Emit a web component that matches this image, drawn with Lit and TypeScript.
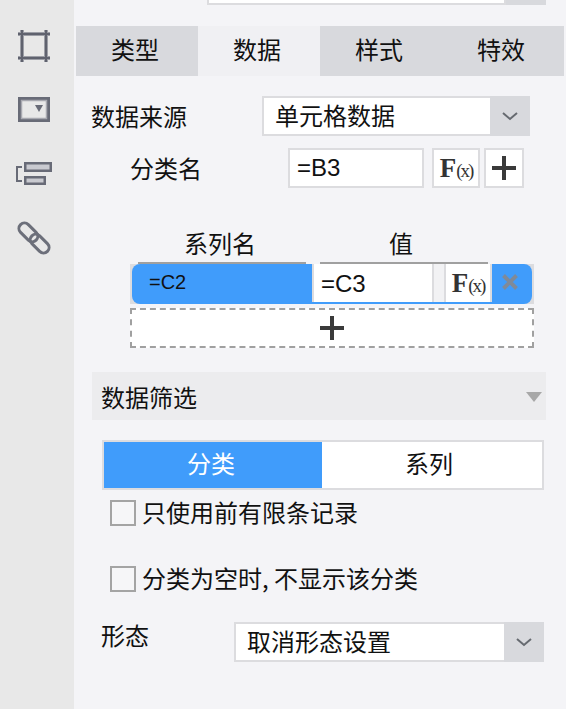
import { LitElement, html, css, svg } from 'lit';
import { customElement } from 'lit/decorators.js';

const chevron = html`<svg width="16" height="10" viewBox="0 0 16 10"><path d="M1 2 L8 8 L15 2" fill="none" stroke="#666a70" stroke-width="2"/></svg>`;
const plus = html`<svg width="24" height="24" viewBox="0 0 24 24"><path d="M0 12H24M12 0V24" stroke="#3a3a3a" stroke-width="4"/></svg>`;

const sideIcons = [
  svg`<path d="M2 8H34M2 32H34M6 4V36M30 4V36" fill="none" stroke="#9c9ea6" stroke-width="4"/><path d="M2 8H34M2 32H34M6 4V36M30 4V36" fill="none" stroke="#5f626e" stroke-width="2"/>`,
  svg`<rect x="3.5" y="8.5" width="29" height="22" fill="none" stroke="#686b77" stroke-width="3"/><rect x="5.5" y="10.5" width="25" height="18" fill="none" stroke="#a8a9b0" stroke-width="1.5"/><path d="M19 15H27L23 22Z" fill="#686b77"/>`,
  svg`<path d="M6 13H1V27H6" fill="none" stroke="#686b77" stroke-width="2"/><rect x="9.25" y="9.25" width="25.5" height="7.5" fill="#c9cad0" stroke="#686b77" stroke-width="2.5"/><rect x="9.25" y="23.25" width="19.5" height="6.5" fill="#c9cad0" stroke="#686b77" stroke-width="2.5"/>`,
  svg`<g transform="rotate(45 18 20)" fill="none" stroke="#6c6f7a" stroke-width="3"><rect x="-1" y="14.5" width="22" height="11" rx="5.5"/><rect x="15" y="14.5" width="22" height="11" rx="5.5"/></g>`,
];

@customElement('app-root')
export class AppRoot extends LitElement {
  static styles = css`
    :host {
      display: flex;
      width: 566px;
      height: 709px;
      overflow: hidden;
      background: #f4f4f7;
      color: #111;
      font-family: "Noto Sans CJK SC", "Liberation Sans", sans-serif;
      font-size: 24px;
      line-height: 30px;
    }
    .side {
      flex: none;
      box-sizing: border-box;
      width: 74px;
      background: #e8e8e8;
      padding: 26px 0 0 16px;
      display: flex;
      flex-direction: column;
      gap: 24px;
    }
    .side svg { display: block; }
    .main { flex: 1; min-width: 0; display: flex; flex-direction: column; }

    .top { display: flex; height: 5px; margin-left: 133px; width: 339px; }
    .top .val { flex: 1; background: #fff; border: 2px solid #dcdcdf; border-top: 0; }
    .top .arr { width: 40px; background: #d8d9dd; }

    .tabs { display: flex; margin: 21px 0 0 2px; width: 488px; height: 50px; }
    .tab {
      box-sizing: border-box;
      flex: 1;
      display: flex;
      align-items: center;
      justify-content: center;
      padding: 0 4px 4px 0;
      background: #d8d9dd;
    }
    .tab.on { background: #f0f0f3; }

    .row { display: flex; align-items: center; }
    .select {
      box-sizing: border-box;
      height: 40px;
      display: flex;
      background: #fff;
      border: 2px solid #dcdcdf;
      border-right: 0;
    }
    .select .txt { flex: 1; padding-left: 11px; line-height: 34px; }
    .select .arr {
      width: 40px;
      margin: -2px 0;
      background: #d8d9dd;
      display: flex;
      align-items: center;
      justify-content: center;
    }

    .source { margin: 20px 0 0 17px; }
    .source .lab { width: 171px; }
    .source .select { width: 268px; }

    .cat { margin-top: 12px; padding-left: 56px; }
    .cat .lab { width: 158px; }
    .input {
      box-sizing: border-box;
      height: 40px;
      background: #fff;
      border: 2px solid #dcdcdf;
      font-family: "Liberation Sans", sans-serif;
      padding-left: 7px;
      line-height: 36px;
    }
    .cat .input { width: 136px; margin-right: 8px; }
    .btn {
      box-sizing: border-box;
      height: 40px;
      background: #fff;
      border: 2px solid #dcdcdf;
      display: flex;
      align-items: center;
      justify-content: center;
    }
    .fx { width: 48px; font-family: "Liberation Serif", serif; color: #333; }
    .fx b { font-size: 27px; line-height: 1; }
    .fx span { font-size: 19px; letter-spacing: -2px; line-height: 1; margin-top: 5px; }
    .add { width: 40px; margin-left: 4px; }

    .heads { display: flex; margin: 40px 0 0 56px; height: 30px; }
    .heads div { text-align: center; }
    .heads .h1 { width: 180px; }
    .heads .h2 { width: 182px; }

    .rules { display: flex; margin: 4px 0 0 64px; }
    .rules i { display: block; height: 2px; background: #a0a0a0; }
    .rules .r1 { width: 168px; margin-right: 14px; }
    .rules .r2 { width: 168px; }

    .series {
      box-sizing: border-box;
      margin-left: 56px;
      width: 404px;
      height: 40px;
      padding: 0 2px;
      background: #dcdcdf;
    }
    .series .inner {
      height: 40px;
      display: flex;
      background: #409cfb;
      border-radius: 8px;
      overflow: hidden;
    }
    .series .name {
      width: 180px;
      padding-left: 17px;
      box-sizing: border-box;
      font-family: "Liberation Sans", sans-serif;
      font-size: 20px;
      line-height: 36px;
    }
    .series .mid {
      width: 180px;
      height: 38px;
      display: flex;
      background: #f2f2f4;
    }
    .series .input { width: 122px; height: 38px; line-height: 40px; border-width: 0 2px; padding-left: 7px; margin-right: 10px; }
    .series .fx { width: 48px; height: 38px; border-width: 0 2px; }
    .series .del {
      flex: 1;
      display: flex;
      align-items: center;
      justify-content: center;
      padding: 0 4px 4px 0;
    }

    .dash {
      box-sizing: border-box;
      margin: 4px 0 0 56px;
      width: 404px;
      height: 40px;
      background: #fff;
      border: 2px dashed #a0a0a0;
      display: flex;
      align-items: center;
      justify-content: center;
    }

    .section {
      box-sizing: border-box;
      margin: 24px 0 0 18px;
      width: 454px;
      height: 48px;
      background: #ececee;
      padding: 2px 4px 0 9px;
      display: flex;
      align-items: center;
      justify-content: space-between;
    }
    .tri { width: 0; height: 0; border: 8px solid transparent; border-top: 10px solid #a8a8a8; border-bottom: 0; }

    .seg {
      box-sizing: border-box;
      margin: 20px 0 0 28px;
      width: 442px;
      height: 50px;
      display: flex;
      background: #fff;
      border: 2px solid #dcdcdf;
    }
    .seg div { box-sizing: border-box; display: flex; align-items: center; justify-content: center; padding-bottom: 4px; }
    .seg .a { width: 218px; background: #409cfb; color: #fff; padding-right: 4px; }
    .seg .b { flex: 1; padding-right: 6px; }

    .check { display: flex; align-items: center; gap: 6px; margin-left: 36px; height: 30px; }
    .check i { display: block; box-sizing: border-box; width: 26px; height: 26px; background: #f6f6f8; border: 2px solid #a4a4a4; }
    .check span { padding-bottom: 3px; }
    .c1 { margin-top: 8px; }
    .c2 { margin-top: 36px; }

    .shape { margin: 26px 0 0 27px; }
    .shape .lab { width: 133px; margin-bottom: 14px; }
    .shape .select { width: 310px; }
  `;

  render() {
    return html`
      <div class="side">
        ${sideIcons.map(i => html`<svg width="40" height="40" viewBox="0 0 40 40">${i}</svg>`)}
      </div>
      <div class="main">
        <div class="top"><div class="val"></div><div class="arr"></div></div>
        <div class="tabs">
          <div class="tab">类型</div>
          <div class="tab on">数据</div>
          <div class="tab">样式</div>
          <div class="tab">特效</div>
        </div>
        <div class="row source">
          <div class="lab">数据来源</div>
          <div class="select"><div class="txt">单元格数据</div><div class="arr">${chevron}</div></div>
        </div>
        <div class="row cat">
          <div class="lab">分类名</div>
          <div class="input">=B3</div>
          <div class="btn fx"><b>F</b><span>(x)</span></div>
          <div class="btn add">${plus}</div>
        </div>
        <div class="heads"><div class="h1">系列名</div><div class="h2">值</div></div>
        <div class="rules"><i class="r1"></i><i class="r2"></i></div>
        <div class="series">
          <div class="inner">
            <div class="name">=C2</div>
            <div class="mid">
              <div class="input">=C3</div>
              <div class="btn fx"><b>F</b><span>(x)</span></div>
            </div>
            <div class="del">
              <svg width="16" height="16" viewBox="0 0 16 16"><path d="M1.5 1.5L14.5 14.5M14.5 1.5L1.5 14.5" stroke="#7f8a99" stroke-width="4"/></svg>
            </div>
          </div>
        </div>
        <div class="dash">${plus}</div>
        <div class="section"><span>数据筛选</span><i class="tri"></i></div>
        <div class="seg"><div class="a">分类</div><div class="b">系列</div></div>
        <div class="check c1"><i></i><span>只使用前有限条记录</span></div>
        <div class="check c2"><i></i><span>分类为空时, 不显示该分类</span></div>
        <div class="row shape">
          <div class="lab">形态</div>
          <div class="select"><div class="txt">取消形态设置</div><div class="arr">${chevron}</div></div>
        </div>
      </div>
    `;
  }
}
